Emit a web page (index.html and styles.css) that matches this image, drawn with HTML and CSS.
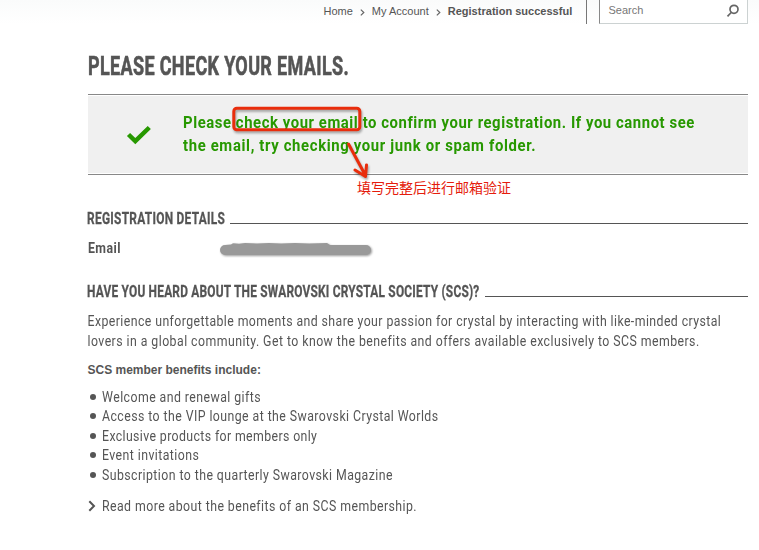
FILE: index.html
```html
<!DOCTYPE html>
<html lang="en">
<head>
<meta charset="utf-8">
<title>Registration successful</title>
<link rel="stylesheet" href="styles.css">
</head>
<body>
<header class="topbar">
  <nav class="crumbs"><span>Home</span><svg class="sep" viewBox="0 0 5 7"><path d="M.8.6 3.8 3.500.8 6.400"/></svg><span>My Account</span><svg class="sep" viewBox="0 0 5 7"><path d="M.8.6 3.8 3.500.8 6.400"/></svg><b>Registration successful</b></nav>
  <div class="search"><span>Search</span><svg class="lens" viewBox="0 0 14 14"><circle cx="8" cy="5.300" r="4"/><path d="M5.200 8.500 1.500 12.300"/></svg></div>
</header>
<main>
  <h1><span class="fit title">PLEASE CHECK YOUR EMAILS.</span></h1>
  <section class="notice">
    <svg class="tick" viewBox="0 0 26 20"><path d="M2.500 9.500 9.300 16.100 23.300 2.500"/></svg>
    <p><span class="fit n1">Please check your email to confirm your registration. If you cannot see</span><br><span class="fit n2">the email, try checking your junk or spam folder.</span></p>
    <svg class="marks" viewBox="0 0 180 110"><rect x="4.800" y="13.300" width="126" height="21.400" rx="3"/><path d="M119.500 49 136.500 80.500M126 75 136.500 81.500 137.500 70"/></svg>
    <span class="note">填写完整后进行邮箱验证</span>
  </section>
  <h2 class="details"><span class="label"><span class="fit">REGISTRATION DETAILS</span></span><i class="rule"></i></h2>
  <div class="email"><b class="fit">Email</b><svg class="smudge" viewBox="0 0 156 18"><path d="M12 4.500 14 3.300 20 3.700 26 3 38 3.500 50 3 62 3.500 76 3 90 3.500 108 3 111 5H147A5 5 0 0 1 147 15H6A5 5 0 0 1 6 5Z"/></svg></div>
  <h2 class="society"><span class="label"><span class="fit">HAVE YOU HEARD ABOUT THE SWAROVSKI CRYSTAL SOCIETY (SCS)?</span></span><i class="rule"></i></h2>
  <p class="intro"><span class="fit i1">Experience unforgettable moments and share your passion for crystal by interacting with like-minded crystal</span><br><span class="fit i2">lovers in a global community. Get to know the benefits and offers available exclusively to SCS members.</span></p>
  <p class="lead">SCS member benefits include:</p>
  <ul>
    <li><span class="fit">Welcome and renewal gifts</span></li>
    <li><span class="fit">Access to the VIP lounge at the Swarovski Crystal Worlds</span></li>
    <li><span class="fit tight">Exclusive products for members only</span></li>
    <li><span class="fit">Event invitations</span></li>
    <li><span class="fit">Subscription to the quarterly Swarovski Magazine</span></li>
  </ul>
  <p class="more"><svg viewBox="0 0 8 12"><path d="M1.300 1.200 6 6 1.300 10.800"/></svg><span class="fit">Read more about the benefits of an SCS membership.</span></p>
</main>
</body>
</html>
```
FILE: styles.css
```css
* { box-sizing: border-box; }
body { margin: 0; width: 759px; height: 550px; overflow: hidden; background: #fff; color: #555; font: 14px/20px Roboto, sans-serif; }
h1, h2, p, ul { margin: 0; padding: 0; }
.fit { display: inline-block; white-space: nowrap; letter-spacing: .49px; transform: scaleX(.88); transform-origin: 0 50%; }
.topbar { display: flex; justify-content: flex-end; height: 24px; padding-right: 11px; background: linear-gradient(#fafbfb, #fff); font: 11px/13px "Liberation Sans", sans-serif; }
.crumbs { display: flex; width: 263.500px; padding-top: 5px; border-right: 1px solid #777; }
.crumbs b { letter-spacing: .02px; }
.sep { width: 5px; height: 7px; margin: 4px 7px 0; padding: 0; fill: none; stroke: #666; stroke-width: 1.200; }
.search { display: flex; justify-content: space-between; width: 149px; height: 24px; margin-left: 12px; padding: 4px 7px 0 8.500px; border: solid #ccd2d2; border-width: 0 1px 1px; border-left-color: #888; background: #fff; color: #777; }
.lens { width: 14px; height: 14px; fill: none; stroke: #666; stroke-width: 1.700; }
main { padding: 28px 11px 0 87.500px; }
h1 { height: 42px; margin-left: .5px; padding-top: 1px; font-size: 25px; line-height: 28px; }
.title { letter-spacing: .49px; transform: scaleX(.72); -webkit-text-stroke: .6px #555; }
.notice { position: relative; display: flex; height: 81px; margin-left: .5px; border: solid #888; border-width: 1px 0; background: #f0f0f0; box-shadow: inset 0 1px #fff, inset 0 -1px #fff; color: #279800; font: bold 16.500px/23px Roboto, sans-serif; }
.tick { width: 26px; height: 20px; margin: 30px 0 0 38px; fill: none; stroke: #279800; stroke-width: 4.500; }
.notice p { width: 550px; margin: 16px 0 0 31px; }
.n1 { letter-spacing: .64px; transform: scaleX(.9); }
.n2 { letter-spacing: .73px; transform: scaleX(.9); }
.marks { position: absolute; left: 141px; top: 0; width: 180px; height: 110px; fill: none; stroke: #e92d0c; stroke-width: 3; stroke-linecap: round; stroke-linejoin: round; filter: drop-shadow(1px 2px 1px #0005); }
.note { position: absolute; left: 269px; top: 82px; color: #e51c0c; font: 14px/21px "Noto Sans CJK SC", sans-serif; white-space: nowrap; }
h2 { display: flex; font-size: 17px; line-height: 20px; }
h2 .fit { transform: scaleX(.7); -webkit-text-stroke: .3px #555; }
.label { flex: none; margin-left: -.5px; white-space: nowrap; }
.rule { flex: 1; height: 1px; margin-top: 15px; background: #555; }
.details { margin-top: 33px; }
.details .label { width: 143px; }
.details .fit { letter-spacing: .4px; }
.society .label { width: 398px; }
.society .fit { letter-spacing: .31px; }
.email { display: flex; height: 30px; margin-top: 10px; }
.email .fit { width: 131px; }
.smudge { width: 156px; height: 18px; margin-top: 2px; fill: #999; filter: drop-shadow(1px 1.500px 1px #0006); }
.society { margin-top: 13px; }
.intro { margin-top: 10px; font-size: 12.320px; }
.intro .fit { height: 20px; vertical-align: top; transform: scaleY(1.136); }
.intro .i1 { letter-spacing: .418px; }
.intro .i2 { letter-spacing: .445px; }
.lead { margin-top: 9px; font: bold 12px/20px "Liberation Sans", sans-serif; }
ul { list-style: none; margin-top: 7px; }
li { display: flex; align-items: center; height: 19.500px; }
li::before { content: ""; width: 6px; height: 6px; margin: 0 6px 0 2.500px; border-radius: 50%; background: #555; }
.tight { letter-spacing: .43px; }
.more { display: flex; margin-top: 11px; }
.more svg { width: 8px; height: 12px; margin: 4px 6px 0 .5px; fill: none; stroke: #555; stroke-width: 2; }
```
